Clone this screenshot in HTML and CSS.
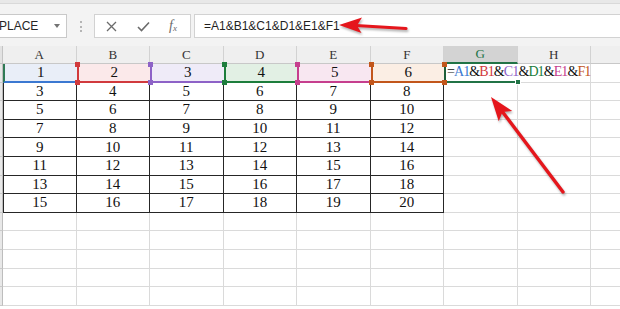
FILE: index.html
```html
<!DOCTYPE html>
<html lang="en">
<head>
    <meta charset="UTF-8">
    <title>Sheet</title>
    <link rel="stylesheet" href="styles.css">
</head>
<body>
    <div class="topstrip"></div>
    <div class="fbar">
        <div class="namebox"><span class="nm">PLACE</span><span class="caret"></span></div>
        <div class="grip"><span></span></div>
        <div class="fnbox">
            <span class="ic"><svg width="11" height="11" viewBox="0 0 11 11"><path d="M1 1L10 10M10 1L1 10" stroke="#6b6b6b" stroke-width="1.3" fill="none"/></svg></span>
            <span class="ic"><svg width="13" height="11" viewBox="0 0 13 11"><path d="M1 6L4.5 9.5L12 1.5" stroke="#6b6b6b" stroke-width="1.6" fill="none"/></svg></span>
            <span class="ic fx">f<small>x</small></span>
        </div>
        <div class="formula">=A1&amp;B1&amp;C1&amp;D1&amp;E1&amp;F1</div>
    </div>

    <div class="sheet">
        <div class="corner"></div>
        <div class="hd">A</div><div class="hd">B</div><div class="hd">C</div><div class="hd">D</div><div class="hd">E</div><div class="hd">F</div><div class="hd on">G</div><div class="hd">H</div><div class="hd"></div>

        <div class="rh"></div>
        <div class="t ref ra">1</div><div class="t ref rb">2</div><div class="t ref rc">3</div><div class="t ref rd">4</div><div class="t ref re">5</div><div class="t ref rf">6</div>
        <div class="sel"><span class="k0">=</span><span class="ka">A1</span><span class="k0">&amp;</span><span class="kb">B1</span><span class="k0">&amp;</span><span class="kc">C1</span><span class="k0">&amp;</span><span class="kd">D1</span><span class="k0">&amp;</span><span class="ke">E1</span><span class="k0">&amp;</span><span class="kf">F1</span><i class="handle"></i></div>
        <div class="c"></div><div class="c"></div>

        <div class="rh"></div>
        <div class="t l">3</div><div class="t">4</div><div class="t">5</div><div class="t">6</div><div class="t">7</div><div class="t">8</div>
        <div class="c"></div><div class="c"></div><div class="c"></div>

        <div class="rh"></div>
        <div class="t l">5</div><div class="t">6</div><div class="t">7</div><div class="t">8</div><div class="t">9</div><div class="t">10</div>
        <div class="c"></div><div class="c"></div><div class="c"></div>

        <div class="rh"></div>
        <div class="t l">7</div><div class="t">8</div><div class="t">9</div><div class="t">10</div><div class="t">11</div><div class="t">12</div>
        <div class="c"></div><div class="c"></div><div class="c"></div>

        <div class="rh"></div>
        <div class="t l">9</div><div class="t">10</div><div class="t">11</div><div class="t">12</div><div class="t">13</div><div class="t">14</div>
        <div class="c"></div><div class="c"></div><div class="c"></div>

        <div class="rh"></div>
        <div class="t l">11</div><div class="t">12</div><div class="t">13</div><div class="t">14</div><div class="t">15</div><div class="t">16</div>
        <div class="c"></div><div class="c"></div><div class="c"></div>

        <div class="rh"></div>
        <div class="t l">13</div><div class="t">14</div><div class="t">15</div><div class="t">16</div><div class="t">17</div><div class="t">18</div>
        <div class="c"></div><div class="c"></div><div class="c"></div>

        <div class="rh"></div>
        <div class="t l">15</div><div class="t">16</div><div class="t">17</div><div class="t">18</div><div class="t">19</div><div class="t">20</div>
        <div class="c"></div><div class="c"></div><div class="c"></div>

        <div class="rh"></div>
        <div class="c"></div><div class="c"></div><div class="c"></div><div class="c"></div><div class="c"></div><div class="c"></div><div class="c"></div><div class="c"></div><div class="c"></div>
        <div class="rh"></div>
        <div class="c"></div><div class="c"></div><div class="c"></div><div class="c"></div><div class="c"></div><div class="c"></div><div class="c"></div><div class="c"></div><div class="c"></div>
        <div class="rh"></div>
        <div class="c"></div><div class="c"></div><div class="c"></div><div class="c"></div><div class="c"></div><div class="c"></div><div class="c"></div><div class="c"></div><div class="c"></div>
        <div class="rh"></div>
        <div class="c"></div><div class="c"></div><div class="c"></div><div class="c"></div><div class="c"></div><div class="c"></div><div class="c"></div><div class="c"></div><div class="c"></div>
        <div class="rh"></div>
        <div class="c"></div><div class="c"></div><div class="c"></div><div class="c"></div><div class="c"></div><div class="c"></div><div class="c"></div><div class="c"></div><div class="c"></div>
    </div>

    <svg class="arrows" width="620" height="309" viewBox="0 0 620 309">
        <path d="M406 28.5L356 25.5" stroke="#e5161c" stroke-width="3.2" stroke-linecap="round" fill="none"/>
        <polygon points="339,25 362,17.5 357,25.5 361.5,33" fill="#e5161c"/>
        <path d="M563 192L503 112.5" stroke="#e5161c" stroke-width="3.4" stroke-linecap="round" fill="none"/>
        <polygon points="491,97 512.3,111 502.5,112.1 498.7,121.2" fill="#e5161c"/>
    </svg>
</body>
</html>
```

FILE: styles.css
```css
* {
    box-sizing: border-box;
}
body {
    margin: 0;
    width: 620px;
    height: 309px;
    overflow: hidden;
    position: relative;
    background: #fff;
    font-family: "Liberation Sans", Arial, sans-serif;
}
.topstrip {
    height: 4px;
    background: #e8e8e8;
    border-bottom: 1px solid #d9d9d9;
}
.fbar {
    height: 42px;
    background: #f3f3f3;
    display: flex;
    align-items: flex-start;
    padding-top: 10px;
}
.namebox {
    width: 67px;
    height: 24px;
    background: #fff;
    border: 1px solid #c9c9c9;
    border-left: none;
    display: flex;
    align-items: center;
    font-size: 12px;
    color: #262626;
}
.nm {
    margin-left: -1px;
}
.caret {
    margin-left: auto;
    margin-right: 6px;
    border-left: 3.5px solid transparent;
    border-right: 3.5px solid transparent;
    border-top: 4px solid #737373;
}
.grip {
    width: 27px;
    height: 24px;
    display: flex;
    justify-content: center;
    align-items: center;
}
.grip span {
    height: 11px;
    border-left: 2px dotted #b5b5b5;
}
.fnbox {
    width: 97px;
    height: 24px;
    background: #fff;
    border: 1px solid #d2d2d2;
    display: flex;
    align-items: center;
}
.ic {
    width: 32px;
    display: flex;
    justify-content: center;
    align-items: center;
}
.fx {
    width: 28px;
    font-family: "Liberation Serif", serif;
    font-style: italic;
    font-size: 14px;
    color: #6b6b6b;
}
.fx small {
    font-size: 9px;
    margin-top: 4px;
}
.formula {
    flex: 1;
    min-width: 0;
    margin-left: 3px;
    height: 24px;
    background: #fff;
    border: 1px solid #d2d2d2;
    border-right: none;
    padding-left: 9px;
    display: flex;
    align-items: center;
    font-size: 12px;
    color: #1f1f1f;
}

.sheet {
    width: 620px;
    overflow: hidden;
    display: grid;
    grid-template-columns: 3px repeat(9, 73.5px);
    grid-template-rows: 18px;
    grid-auto-rows: 18.6px;
}
.corner {
    background: #e2e2e2;
    border-right: 1px solid #c4c4c4;
    border-bottom: 1px solid #c4c4c4;
}
.hd {
    background: #efefef;
    border-right: 1px solid #d2d2d2;
    border-bottom: 1px solid #c8c8c8;
    display: flex;
    justify-content: center;
    align-items: center;
    font-family: "Liberation Serif", serif;
    font-size: 13px;
    color: #333;
}
.hd.on {
    background: #d3d3d3;
    color: #217346;
    border-bottom: 2px solid #217346;
}
.rh {
    background: #e8e8e8;
    border-right: 1px solid #bdbdbd;
    border-bottom: 1px solid #cacaca;
}
.c {
    border-right: 1px solid #dadada;
    border-bottom: 1px solid #dadada;
}
.t {
    display: flex;
    justify-content: center;
    align-items: center;
    font-family: "Liberation Serif", serif;
    font-size: 15px;
    color: #111;
    border-right: 1px solid #262626;
    border-bottom: 1px solid #262626;
}
.t.l {
    border-left: 1px solid #262626;
}

/* referenced cells of the formula */
.ra { --c: #3b78d1; --bg: #e9eef8; }
.rb { --c: #d13a3d; --bg: #fbe9ea; }
.rc { --c: #8d62c7; --bg: #efebf8; }
.rd { --c: #1d7d3c; --bg: #e2f0e4; }
.re { --c: #c63f8e; --bg: #f8e7f1; }
.rf { --c: #c2561b; --bg: #fbeee4; }
.ref {
    position: relative;
    background: var(--bg);
    border-right: none;
    border-left: 2px solid var(--c);
    border-bottom: 2px solid var(--c);
}
.ra {
    border-left-color: #2f7a55;
}
.ref::before,
.ref::after {
    content: "";
    position: absolute;
    left: -4px;
    width: 5px;
    height: 5px;
    background: var(--c);
    z-index: 1;
}
.ref::before {
    top: -2px;
}
.ref::after {
    bottom: -4px;
}
.ra::before,
.ra::after {
    display: none;
}

.sel {
    position: relative;
    z-index: 2;
    display: flex;
    align-items: center;
    padding-left: 1px;
    white-space: nowrap;
    overflow: visible;
    border-left: 2px solid #1f5f3a;
    border-bottom: 2px solid #217346;
    font-family: "Liberation Serif", serif;
    font-size: 14px;
    letter-spacing: -0.9px;
}
.sel::before,
.sel::after {
    content: "";
    position: absolute;
    left: -4px;
    width: 5px;
    height: 5px;
    background: #c2561b;
}
.sel::before {
    top: -2px;
}
.sel::after {
    bottom: -4px;
}
.handle {
    position: absolute;
    right: -3px;
    bottom: -4px;
    width: 6px;
    height: 6px;
    background: #217346;
    border: 1px solid #fff;
}
.k0 { color: #111; }
.ka { color: #3b78d1; }
.kb { color: #d13a3d; }
.kc { color: #8d62c7; }
.kd { color: #1d7d3c; }
.ke { color: #c63f8e; }
.kf { color: #c2561b; }

.arrows {
    position: absolute;
    left: 0;
    top: 0;
    pointer-events: none;
    filter: drop-shadow(1px 2px 1px rgba(0, 0, 0, 0.3));
}
```
